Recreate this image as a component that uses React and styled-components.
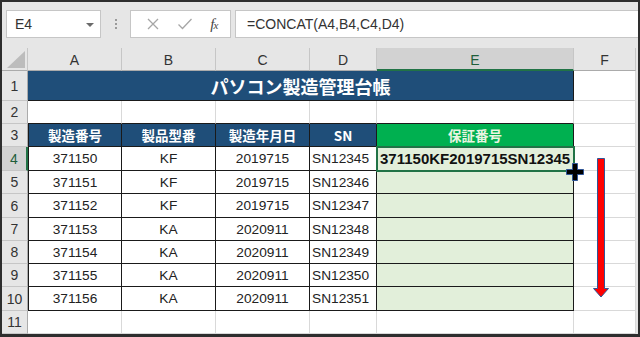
import React from 'react';
import styled, { createGlobalStyle } from 'styled-components';

const GlobalStyle = createGlobalStyle`
  html, body {
    margin: 0;
    padding: 0;
    background: #ffffff;
  }
  * {
    box-sizing: border-box;
  }
`;

const LATIN = `"Liberation Sans", "Noto Sans CJK JP", Arial, sans-serif`;
const CJK = `"Noto Sans CJK JP", "Liberation Sans", sans-serif`;

const Frame = styled.div`
  width: 640px;
  height: 337px;
  border-style: solid;
  border-color: #2e2e2e;
  border-width: 2px 2px 3px 2px;
  background: #e6e6e6;
  overflow: hidden;
  font-family: ${LATIN};
`;

// --- formula bar ---
const Toolbar = styled.div`
  height: 46px;
  display: flex;
  align-items: flex-start;
  padding: 8px 0 0 4px;
`;

const NameBox = styled.div`
  width: 95px;
  height: 28px;
  background: #fff;
  border: 1px solid #c6c6c6;
  display: flex;
  align-items: center;
  justify-content: space-between;
  padding: 0 6px 0 8px;
  font-size: 14px;
  color: #333;
`;

const Caret = styled.span`
  width: 0;
  height: 0;
  border-left: 4px solid transparent;
  border-right: 4px solid transparent;
  border-top: 4px solid #6a6a6a;
  margin-top: 1px;
`;

const Grip = styled.div`
  width: 29px;
  height: 28px;
  display: flex;
  flex-direction: column;
  align-items: center;
  justify-content: center;
  gap: 2px;

  span {
    width: 2px;
    height: 2px;
    background: #9a9a9a;
  }
`;

const FuncBox = styled.div`
  width: 101px;
  height: 28px;
  background: #fff;
  border: 1px solid #c6c6c6;
  display: flex;
  align-items: center;
  justify-content: space-around;
  padding: 0 4px 0 6px;
`;

const Fx = styled.span`
  font-family: "Liberation Serif", serif;
  font-style: italic;
  font-size: 15px;
  color: #444;
  letter-spacing: -1px;

  small {
    font-size: 11px;
  }
`;

const FormulaInput = styled.div`
  flex: 1;
  height: 28px;
  margin-left: 4px;
  background: #fff;
  border: 1px solid #c6c6c6;
  border-right: none;
  display: flex;
  align-items: center;
  padding-left: 11px;
  font-size: 14px;
  color: #333;
`;

// --- sheet ---
const Sheet = styled.div`
  position: relative;
  width: 634px;
  display: grid;
  grid-template-columns: 26px 94px 94px 94px 67px 197px 62px;
  grid-template-rows: 23px 30px 23px 23px 24px 23px 24px 23px 23px 23px 24px 23px;
  background: #fff;
`;

const Corner = styled.div`
  background: #e6e6e6;
  border-right: 1px solid #c6c6c6;
  border-bottom: 1px solid #ababab;
  display: flex;
  align-items: flex-end;
  justify-content: flex-end;
  padding: 0 2px 2px 0;
`;

const ColHead = styled.div`
  background: ${({ $active }) => ($active ? '#d2d2d2' : '#e6e6e6')};
  border-right: 1px solid #c6c6c6;
  border-bottom: ${({ $active }) => ($active ? '2px solid #217346' : '1px solid #ababab')};
  display: flex;
  align-items: center;
  justify-content: center;
  font-size: 14px;
  color: ${({ $active }) => ($active ? '#1e5e3a' : '#333')};
  padding-top: 2px;
`;

const RowHead = styled.div`
  background: ${({ $active }) => ($active ? '#d2d2d2' : '#e6e6e6')};
  border-right: ${({ $active }) => ($active ? '2px solid #217346' : '1px solid #ababab')};
  border-bottom: 1px solid #c6c6c6;
  display: flex;
  align-items: center;
  justify-content: center;
  font-size: 14px;
  color: ${({ $active }) => ($active ? '#1e5e3a' : '#333')};
`;

const Cell = styled.div`
  background: ${({ $bg }) => $bg || '#fff'};
  border-right: 1px solid ${({ $edge }) => ($edge ? '#1a1a1a' : '#d9d9d9')};
  border-bottom: 1px solid ${({ $edge, $under }) => ($edge || $under ? '#1a1a1a' : '#d9d9d9')};
  border-left: ${({ $first }) => ($first ? '1px solid #1a1a1a' : 'none')};
  display: flex;
  align-items: center;
  justify-content: ${({ $align }) => $align || 'center'};
  padding-left: ${({ $align }) => ($align === 'flex-start' ? '2px' : '0')};
  font-size: 13.7px;
  color: #222;
  white-space: nowrap;
`;

const Title = styled(Cell)`
  grid-column: span 5;
  background: #1f4e79;
  border-left: none;
  font-family: ${CJK};
  font-weight: 700;
  font-size: 18px;
  color: #fff;
  padding-left: 0;
`;

const HeadCell = styled(Cell)`
  font-family: ${CJK};
  font-weight: 700;
  font-size: 13.5px;
  color: ${({ $green }) => ($green ? '#e9f5e1' : '#fff')};
  background: ${({ $green }) => ($green ? '#00b050' : '#1f4e79')};
  padding-left: 0;
`;

const ResultCell = styled(Cell)`
  position: relative;
  z-index: 1;
  outline: 2px solid #217346;
  outline-offset: -1px;
  padding-left: 3px;
  font-weight: 700;
  font-size: 15px;
  color: #111;
  overflow: visible;
`;

const FillCursor = styled.svg`
  position: absolute;
  left: 563px;
  top: 115px;
  z-index: 3;
`;

const Arrow = styled.svg`
  position: absolute;
  left: 591px;
  top: 110px;
  z-index: 2;
`;

const rows = [
  ['371150', 'KF', '2019715', 'SN12345'],
  ['371151', 'KF', '2019715', 'SN12346'],
  ['371152', 'KF', '2019715', 'SN12347'],
  ['371153', 'KA', '2020911', 'SN12348'],
  ['371154', 'KA', '2020911', 'SN12349'],
  ['371155', 'KA', '2020911', 'SN12350'],
  ['371156', 'KA', '2020911', 'SN12351'],
];

const headers = ['製造番号', '製品型番', '製造年月日', 'SN'];

export default function App() {
  return (
    <>
      <GlobalStyle />
      <Frame>
        <Toolbar>
          <NameBox>
            E4
            <Caret />
          </NameBox>
          <Grip>
            <span />
            <span />
            <span />
          </Grip>
          <FuncBox>
            <svg width="14" height="14" viewBox="0 0 14 14">
              <path d="M2 2 L12 12 M12 2 L2 12" stroke="#a6a6a6" strokeWidth="1.3" fill="none" />
            </svg>
            <svg width="16" height="14" viewBox="0 0 16 14">
              <path d="M1.5 7.5 L5.5 11.5 L14.5 2" stroke="#a6a6a6" strokeWidth="1.3" fill="none" />
            </svg>
            <Fx>
              f<small>x</small>
            </Fx>
          </FuncBox>
          <FormulaInput>=CONCAT(A4,B4,C4,D4)</FormulaInput>
        </Toolbar>

        <Sheet>
          <Corner>
            <svg width="18" height="17" viewBox="0 0 18 17">
              <path d="M18 0 L18 17 L0 17 Z" fill="#bcbcbc" />
            </svg>
          </Corner>
          {['A', 'B', 'C', 'D', 'E', 'F'].map((c) => (
            <ColHead key={c} $active={c === 'E'}>
              {c}
            </ColHead>
          ))}

          <RowHead>1</RowHead>
          <Title $edge>パソコン製造管理台帳</Title>
          <Cell />

          <RowHead>2</RowHead>
          {[0, 1, 2, 3, 4].map((i) => (
            <Cell key={i} $under />
          ))}
          <Cell />

          <RowHead>3</RowHead>
          {headers.map((h, i) => (
            <HeadCell key={h} $edge $first={i === 0}>
              {h}
            </HeadCell>
          ))}
          <HeadCell $edge $green>
            保証番号
          </HeadCell>
          <Cell />

          {rows.map((r, i) => (
            <React.Fragment key={r[0]}>
              <RowHead $active={i === 0}>{i + 4}</RowHead>
              <Cell $edge $first>
                {r[0]}
              </Cell>
              <Cell $edge>{r[1]}</Cell>
              <Cell $edge>{r[2]}</Cell>
              <Cell $edge $align="flex-start">
                {r[3]}
              </Cell>
              {i === 0 ? (
                <ResultCell $edge $bg="#e2efda" $align="flex-start">
                  {r.join('')}
                </ResultCell>
              ) : (
                <Cell $edge $bg="#e2efda" />
              )}
              <Cell />
            </React.Fragment>
          ))}

          <RowHead>11</RowHead>
          {[0, 1, 2, 3, 4, 5].map((i) => (
            <Cell key={i} />
          ))}

          <FillCursor width="20" height="18" viewBox="0 0 20 18">
            <path
              d="M7.5 0.5 H12.5 V6.5 H18.5 V11.5 H12.5 V17.5 H7.5 V11.5 H1.5 V6.5 H7.5 Z"
              fill="#000"
              stroke="#2f5597"
              strokeWidth="1"
            />
          </FillCursor>
          <Arrow width="16" height="140" viewBox="0 0 16 140">
            <path
              d="M4.5 0.5 H11.5 V130.5 H15.5 L8 139 L0.5 130.5 H4.5 Z"
              fill="#ff0000"
              stroke="#2f5597"
              strokeWidth="1"
            />
          </Arrow>
        </Sheet>
      </Frame>
    </>
  );
}
